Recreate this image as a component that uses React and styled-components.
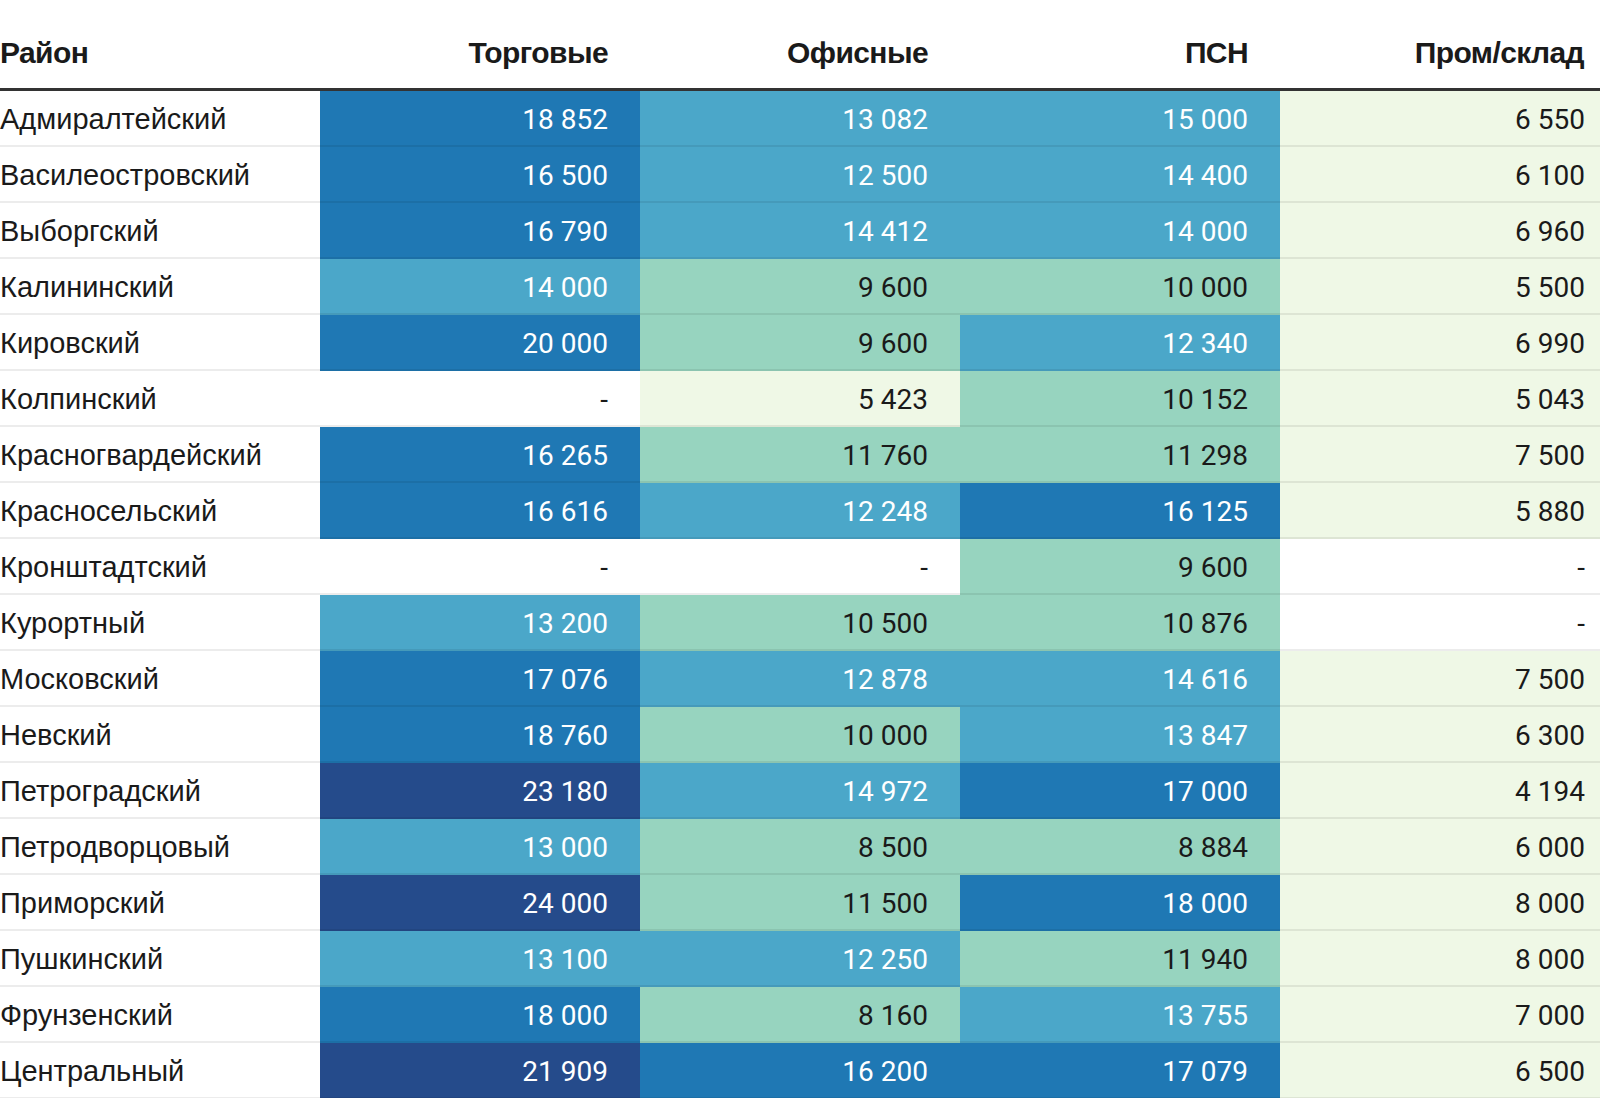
import React from 'react';
import styled, { createGlobalStyle, css } from 'styled-components';

const GlobalStyle = createGlobalStyle`
  html, body {
    margin: 0;
    padding: 0;
    background: #fff;
    overflow: hidden;
  }
  body {
    font-family: 'Liberation Sans', Arial, sans-serif;
  }
`;

const rows = [
  ['Адмиралтейский', 18852, 13082, 15000, 6550],
  ['Василеостровский', 16500, 12500, 14400, 6100],
  ['Выборгский', 16790, 14412, 14000, 6960],
  ['Калининский', 14000, 9600, 10000, 5500],
  ['Кировский', 20000, 9600, 12340, 6990],
  ['Колпинский', null, 5423, 10152, 5043],
  ['Красногвардейский', 16265, 11760, 11298, 7500],
  ['Красносельский', 16616, 12248, 16125, 5880],
  ['Кронштадтский', null, null, 9600, null],
  ['Курортный', 13200, 10500, 10876, null],
  ['Московский', 17076, 12878, 14616, 7500],
  ['Невский', 18760, 10000, 13847, 6300],
  ['Петроградский', 23180, 14972, 17000, 4194],
  ['Петродворцовый', 13000, 8500, 8884, 6000],
  ['Приморский', 24000, 11500, 18000, 8000],
  ['Пушкинский', 13100, 12250, 11940, 8000],
  ['Фрунзенский', 18000, 8160, 13755, 7000],
  ['Центральный', 21909, 16200, 17079, 6500],
];

const columns = ['Торговые', 'Офисные', 'ПСН', 'Пром/склад'];

// value -> [background, text]
const scale = (v) => {
  if (v == null) return ['#ffffff', '#1a1a1a'];
  if (v <= 8000) return ['#eff8e6', '#1a1a1a'];
  if (v < 12000) return ['#97d4bf', '#1a1a1a'];
  if (v < 16000) return ['#4ba7c9', '#ffffff'];
  if (v <= 20000) return ['#1f78b4', '#ffffff'];
  return ['#254b8b', '#ffffff'];
};

const format = (v) => (v == null ? '-' : String(v).replace(/\B(?=(\d{3})+(?!\d))/g, '\u00a0'));

const Table = styled.div`
  width: 1600px;
  display: flex;
  flex-direction: column;
`;

const Row = styled.div`
  display: grid;
  grid-template-columns: repeat(5, 320px);
  height: ${({ $head }) => ($head ? '91px' : '56px')};
  ${({ $head }) =>
    $head &&
    css`
      border-bottom: 3px solid #333;
      box-sizing: border-box;
    `}
`;

const HeadCell = styled.div`
  display: flex;
  align-items: flex-end;
  justify-content: ${({ $first }) => ($first ? 'flex-start' : 'flex-end')};
  padding: 0 ${({ $last, $first }) => ($first ? '0' : $last ? '16px' : '32px')} 17px 0;
  font-family: 'Liberation Sans', Arial, sans-serif;
  font-weight: 700;
  font-size: 30px;
  line-height: 36px;
  letter-spacing: -0.6px;
  color: #1a1a1a;
`;

const Cell = styled.div`
  display: flex;
  align-items: center;
  box-sizing: border-box;
  padding-top: 3px;
  border-bottom: 2px solid rgba(0, 0, 0, 0.075);
  background: ${({ $bg }) => $bg || '#fff'};
  color: ${({ $fg }) => $fg || '#1a1a1a'};
`;

const NameCell = styled(Cell)`
  font-family: 'Liberation Sans', Arial, sans-serif;
  font-size: 29px;
`;

const ValueCell = styled(Cell)`
  justify-content: flex-end;
  padding-right: ${({ $last }) => ($last ? '15px' : '32px')};
  font-family: Roboto, 'Liberation Sans', sans-serif;
  font-size: 28px;
`;

export default function App() {
  return (
    <>
      <GlobalStyle />
      <Table>
        <Row $head>
          <HeadCell $first>Район</HeadCell>
          {columns.map((c, i) => (
            <HeadCell key={c} $last={i === columns.length - 1}>
              {c}
            </HeadCell>
          ))}
        </Row>
        {rows.map(([name, ...values]) => (
          <Row key={name}>
            <NameCell>{name}</NameCell>
            {values.map((v, i) => {
              const [bg, fg] = scale(v);
              return (
                <ValueCell key={i} $bg={bg} $fg={fg} $last={i === values.length - 1}>
                  {format(v)}
                </ValueCell>
              );
            })}
          </Row>
        ))}
      </Table>
    </>
  );
}
